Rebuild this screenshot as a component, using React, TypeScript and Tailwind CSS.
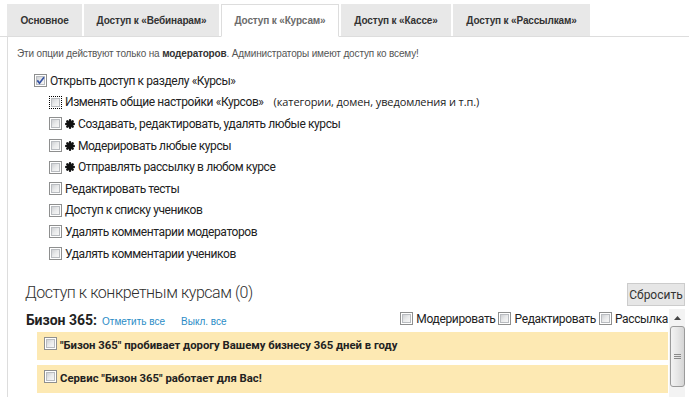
import React from "react";

function Box({ checked = false, focus = false }: { checked?: boolean; focus?: boolean }) {
  return (
    <span
      className={
        "relative inline-flex w-[13px] h-[13px] shrink-0 border bg-white p-[1px] " +
        (focus ? "border-dotted border-black" : "border-[#8e8f8f]")
      }
    >
      <span className="flex-1 bg-gradient-to-br from-[#cfd1d4] via-[#e9eaeb] to-[#f7f7f7] border border-[#b9bcc0]" />
      {checked && (
        <svg className="absolute left-0 top-0" width="11" height="11" viewBox="0 0 11 11">
          <path d="M2.3 5.4 L4.5 8.2 L9 2.2" fill="none" stroke="#3552a3" strokeWidth="1.7" />
        </svg>
      )}
    </span>
  );
}

function Star() {
  return (
    <svg width="10" height="10" viewBox="0 0 10 10" className="shrink-0">
      <g stroke="#111" strokeWidth="2.4" strokeLinecap="round">
        <line x1="5" y1="1.2" x2="5" y2="8.8" />
        <line x1="1.2" y1="5" x2="8.8" y2="5" />
        <line x1="2.3" y1="2.3" x2="7.7" y2="7.7" />
        <line x1="7.7" y1="2.3" x2="2.3" y2="7.7" />
      </g>
      <circle cx="5" cy="5" r="2.2" fill="#111" />
    </svg>
  );
}

function Row({
  indent,
  children,
  checked,
  focus,
  star,
}: {
  indent?: boolean;
  children: React.ReactNode;
  checked?: boolean;
  focus?: boolean;
  star?: boolean;
}) {
  return (
    <div className={"flex items-center h-[21.6px] " + (indent ? "pl-[41px]" : "pl-[26px]")}>
      <Box checked={checked} focus={focus} />
      {star ? (
        <span className="flex items-center ml-[3px] gap-[3px]">
          <Star />
          <span>{children}</span>
        </span>
      ) : (
        <span className="ml-[3px]">{children}</span>
      )}
    </div>
  );
}

const tabs = [
  { label: "Основное", w: "w-[75px]" },
  { label: "Доступ к «Вебинарам»", w: "w-[135px]" },
  { label: "Доступ к «Курсам»", w: "w-[118px]", active: true },
  { label: "Доступ к «Кассе»", w: "w-[110px]" },
  { label: "Доступ к «Рассылкам»", w: "w-[137px]" },
];

export default function App() {
  return (
    <div className="w-[689px] h-[397px] overflow-hidden bg-white font-['Roboto',sans-serif] text-[#222]">
      {/* Tabs */}
      <div className="flex items-end gap-[2px] pl-[7px] pt-[5px] h-[37px] border-b border-[#dddddd]">
        {tabs.map((t) => (
          <div
            key={t.label}
            className={
              "h-[32px] flex items-center justify-center font-['Liberation_Sans',Arial,sans-serif] font-bold text-[10px] tracking-[-0.15px] " +
              t.w +
              " " +
              (t.active
                ? "bg-white border border-[#dddddd] border-b-white h-[33px] -mb-px text-[#6b6b6b]"
                : "bg-[#e8e8e8] text-[#333]")
            }
          >
            {t.label}
          </div>
        ))}
      </div>

      {/* Panel */}
      <div className="ml-[7px] border-l border-[#dddddd] h-[360px] flex flex-col">
        <div className="pl-[9px] pt-[10px] h-[24px] leading-[14px] font-['Liberation_Sans',Arial,sans-serif] text-[10px] tracking-[-0.15px] text-[#555]">
          Эти опции действуют только на <b className="text-[#333]">модераторов</b>. Администраторы имеют доступ ко всему!
        </div>

        <div className="mt-[9px] text-[12px] tracking-[-0.4px]">
          <Row checked>Открыть доступ к разделу «Курсы»</Row>
          <Row indent focus>
            Изменять общие настройки «Курсов»
            <span className="ml-[10px] font-['Open_Sans',sans-serif] text-[11px] tracking-[-0.1px]">(категории, домен, уведомления и т.п.)</span>
          </Row>
          <Row indent star>Создавать, редактировать, удалять любые курсы</Row>
          <Row indent star>Модерировать любые курсы</Row>
          <Row indent star>Отправлять рассылку в любом курсе</Row>
          <Row indent>Редактировать тесты</Row>
          <Row indent>Доступ к списку учеников</Row>
          <Row indent>Удалять комментарии модераторов</Row>
          <Row indent>Удалять комментарии учеников</Row>
        </div>

        {/* Heading + reset */}
        <div className="mt-[19px] flex items-start justify-between pr-[4px]">
          <div className="pl-[17px] text-[16px] tracking-[-0.45px] leading-[20px] text-[#2e2e2e] font-light">
            Доступ к конкретным курсам (0)
          </div>
          <button className="h-[23px] w-[58px] bg-[#e6e6e6] border border-[#cccccc] text-[12px] text-[#333]">
            Сбросить
          </button>
        </div>

        {/* Scroll list */}
        <div className="mt-[3px] ml-[16px] mr-[4px] flex flex-1 min-h-0">
          <div className="flex-1 min-w-0">
            <div className="h-[22px] flex items-center justify-between pl-[2px] pr-[1px]">
              <div className="flex items-baseline">
                <span className="font-bold text-[14px] text-[#222]">Бизон 365:</span>
                <span className="ml-[5px] text-[10px] text-[#2a8cc6] font-['Liberation_Sans',Arial,sans-serif]">Отметить все</span>
                <span className="ml-[16px] text-[10px] text-[#2a8cc6] font-['Liberation_Sans',Arial,sans-serif]">Выкл. все</span>
              </div>
              <div className="flex items-center text-[12px] tracking-[-0.35px] -mt-[3px]">
                <Box />
                <span className="ml-[3px]">Модерировать</span>
                <span className="ml-[3px]"><Box /></span>
                <span className="ml-[3px]">Редактировать</span>
                <span className="ml-[3px]"><Box /></span>
                <span className="ml-[3px]">Рассылка</span>
              </div>
            </div>
            <div className="ml-[13px] mr-[1px] mt-[1px] flex flex-col gap-[5px]">
              <div className="h-[28px] bg-[#fde9b3] flex items-start pl-[7px] pt-[5px]">
                <Box />
                <span className="ml-[3px] mt-[1px] font-bold text-[11.3px] text-[#222]">
                  "Бизон 365" пробивает дорогу Вашему бизнесу 365 дней в году
                </span>
              </div>
              <div className="h-[28px] bg-[#fde9b3] flex items-start pl-[7px] pt-[5px]">
                <Box />
                <span className="ml-[3px] mt-[1px] font-bold text-[11.3px] text-[#222]">
                  Сервис "Бизон 365" работает для Вас!
                </span>
              </div>
            </div>
          </div>
          {/* scrollbar */}
          <div className="w-[16px] bg-[#f3f3f3] flex flex-col items-center">
            <div className="h-[17px] flex items-center justify-center">
              <svg width="7" height="4" viewBox="0 0 7 4">
                <path d="M0 4 L3.5 0 L7 4 Z" fill="#444" />
              </svg>
            </div>
            <div className="w-[15px] h-[61px] rounded-[3px] border border-[#9a9a9a] bg-gradient-to-r from-[#f3f3f3] via-[#e6e6e6] to-[#d5d5d5] flex flex-col items-center justify-center gap-[1px]">
              <span className="w-[7px] h-px bg-[#8a8a8a]" />
              <span className="w-[7px] h-px bg-[#8a8a8a]" />
              <span className="w-[7px] h-px bg-[#8a8a8a]" />
            </div>
          </div>
        </div>
      </div>
    </div>
  );
}
